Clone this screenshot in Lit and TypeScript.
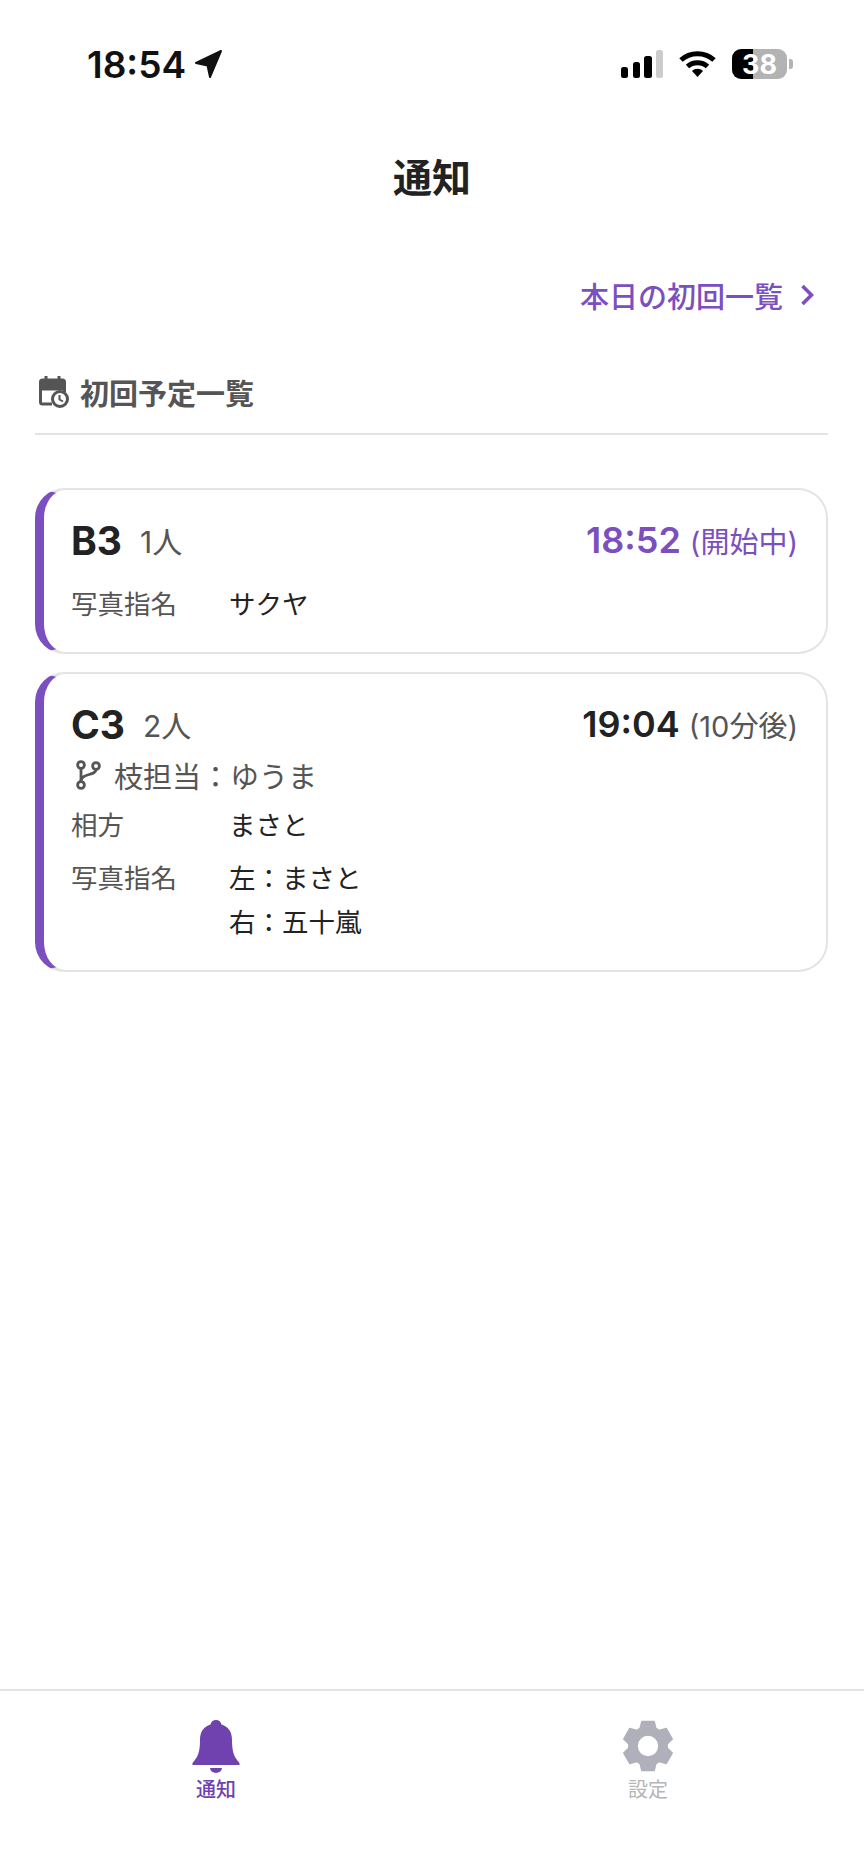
import { LitElement, html, css, unsafeCSS } from 'lit';
import { customElement } from 'lit/decorators.js';

const PURPLE = '#7b4fc0';
const purple = unsafeCSS(PURPLE);

interface Detail {
    label: string;
    values: string[];
}

interface Shift {
    seat: string;
    people: string;
    time: string;
    note: string;
    active?: boolean;
    branch?: string;
    details: Detail[];
}

const SHIFTS: Shift[] = [
    {
        seat: 'B3',
        people: '1人',
        time: '18:52',
        note: '(開始中)',
        active: true,
        details: [{ label: '写真指名', values: ['サクヤ'] }],
    },
    {
        seat: 'C3',
        people: '2人',
        time: '19:04',
        note: '(10分後)',
        branch: '枝担当：ゆうま',
        details: [
            { label: '相方', values: ['まさと'] },
            { label: '写真指名', values: ['左：まさと', '右：五十嵐'] },
        ],
    },
];

// six chunky teeth, flat on top, centred on (50,50)
function gearPath() {
    const pt = (r: number, deg: number) => {
        const a = (deg * Math.PI) / 180;
        return `${(50 + r * Math.cos(a)).toFixed(2)} ${(50 + r * Math.sin(a)).toFixed(2)}`;
    };
    let d = '';
    for (let i = 0; i < 6; i++) {
        const c = -90 + i * 60;
        d += `${i === 0 ? 'M' : 'L'}${pt(37, c - 24)} L${pt(48.5, c - 14)} L${pt(48.5, c + 14)} L${pt(37, c + 24)} `;
    }
    return `${d}Z M50 29 A21 21 0 1 0 50 71 A21 21 0 1 0 50 29 Z`;
}

@customElement('app-root')
export class AppRoot extends LitElement {
    static styles = css`
        :host {
            display: block;
            font-family: Inter, 'Noto Sans CJK JP', sans-serif;
            background: #fff;
            color: #222;
        }
        .page {
            display: flex;
            flex-direction: column;
            height: 1873px;
            background: #fff;
        }
        .status {
            display: flex;
            justify-content: space-between;
            align-items: center;
            height: 128px;
            padding: 0 71px 0 87px;
            box-sizing: border-box;
            flex: none;
        }
        .status-left {
            display: flex;
            align-items: center;
            gap: 8px;
            font-size: 37px;
            font-weight: 600;
            color: #111;
        }
        .status-right {
            display: flex;
            align-items: center;
            gap: 16px;
        }
        .battery {
            display: flex;
            align-items: center;
            gap: 2px;
        }
        .battery-body {
            width: 55px;
            height: 30px;
            border-radius: 9px;
            display: flex;
            align-items: center;
            justify-content: center;
            color: #fff;
            font-size: 27px;
            font-weight: 700;
            background: linear-gradient(90deg, #000 0 38%, #b3b3b3 38% 100%);
        }
        .battery-nub {
            width: 4px;
            height: 10px;
            background: #b3b3b3;
            border-radius: 0 3px 3px 0;
        }
        .title {
            height: 100px;
            line-height: 100px;
            text-align: center;
            font-size: 39px;
            font-weight: 700;
            flex: none;
        }
        .main {
            flex: 1;
            padding: 0 36px 0 35px;
        }
        .today {
            display: flex;
            justify-content: flex-end;
            align-items: center;
            gap: 17px;
            height: 40px;
            margin-top: 47px;
            padding-right: 14px;
            color: ${purple};
            font-size: 29px;
            font-weight: 500;
        }
        .section {
            display: flex;
            align-items: center;
            gap: 11px;
            height: 40px;
            margin-top: 57px;
            padding: 0 0 21px 4px;
            border-bottom: 2px solid #e4e4e4;
            color: #555;
            font-size: 29px;
            font-weight: 700;
        }
        .cards {
            display: flex;
            flex-direction: column;
            gap: 18px;
            margin-top: 53px;
        }
        .card {
            border: 2px solid #e4e4e4;
            border-left: 9px solid ${purple};
            border-radius: 30px;
            padding: 26px 28px 30px 27px;
        }
        .head {
            display: flex;
            justify-content: space-between;
            align-items: center;
            height: 48px;
        }
        .seat-group, .time-group {
            display: flex;
            align-items: center;
        }
        .seat {
            font-size: 39px;
            font-weight: 700;
            margin-right: 18px;
        }
        .people {
            font-size: 30px;
            color: #555;
        }
        .time {
            font-size: 36px;
            font-weight: 600;
            margin-right: 9px;
        }
        .note {
            font-size: 29px;
            color: #555;
        }
        .active .time, .active .note {
            color: ${purple};
        }
        .branch {
            display: flex;
            align-items: center;
            gap: 13px;
            height: 36px;
            margin-top: 9px;
            padding-left: 4px;
            font-size: 29px;
            color: #555;
        }
        .detail {
            display: grid;
            grid-template-columns: 158px 1fr;
            margin-top: 14px;
            font-size: 26.5px;
            line-height: 36px;
        }
        .detail.multi {
            margin-top: 17px;
        }
        .active .detail {
            margin-top: 22px;
        }
        .label {
            color: #555;
        }
        .values {
            display: flex;
            flex-direction: column;
            gap: 8px;
        }
        .nav {
            display: flex;
            flex: none;
            height: 184px;
            box-sizing: border-box;
            border-top: 2px solid #e4e4e4;
        }
        .tab {
            flex: 1;
            display: flex;
            flex-direction: column;
            align-items: center;
            padding-top: 29px;
            font-size: 20px;
            line-height: 24px;
            color: #b5b5b8;
        }
        .tab svg {
            display: block;
            margin-bottom: 4px;
        }
        .tab svg.gear {
            margin-bottom: 6px;
        }
        .tab.on {
            color: #6f42b0;
            font-weight: 500;
        }
    `;

    private renderStatus() {
        return html`
            <div class="status">
                <div class="status-left">
                    <span>18:54</span>
                    <svg width="29" height="30" viewBox="0 0 29 30" fill="#111" stroke="#111" stroke-width="2" stroke-linejoin="round">
                        <path d="M2 14 L27 2 L16 28 L13.5 16.5 Z" />
                    </svg>
                </div>
                <div class="status-right">
                    <svg width="42" height="28" viewBox="0 0 42 28">
                        <rect x="0" y="17" width="7" height="11" rx="2.5" fill="#000" />
                        <rect x="12" y="12" width="7" height="16" rx="2.5" fill="#000" />
                        <rect x="23" y="6" width="8" height="22" rx="2.5" fill="#000" />
                        <rect x="35" y="0" width="7" height="28" rx="2.5" fill="#ccc" />
                    </svg>
                    <svg width="37" height="28" viewBox="0 0 37 28" fill="none" stroke="#000" stroke-width="5">
                        <path d="M2 10 C 11 1.5 26 1.5 35 10" />
                        <path d="M8.5 16.5 C 14 11.5 23 11.5 28.5 16.5" />
                        <path d="M13 21 L18.5 27 L24 21 C 21 18 16 18 13 21 Z" fill="#000" stroke="none" />
                    </svg>
                    <div class="battery">
                        <div class="battery-body">38</div>
                        <div class="battery-nub"></div>
                    </div>
                </div>
            </div>
        `;
    }

    private renderCard(s: Shift) {
        return html`
            <div class="card ${s.active ? 'active' : ''}">
                <div class="head">
                    <div class="seat-group">
                        <span class="seat">${s.seat}</span>
                        <span class="people">${s.people}</span>
                    </div>
                    <div class="time-group">
                        <span class="time">${s.time}</span>
                        <span class="note">${s.note}</span>
                    </div>
                </div>
                ${s.branch
                    ? html`<div class="branch">
                          <svg width="26" height="30" viewBox="0 0 26 30" fill="none" stroke="#555" stroke-width="2.8">
                              <circle cx="6" cy="5" r="3.4" />
                              <circle cx="6" cy="25" r="3.4" />
                              <circle cx="21" cy="6" r="3.4" />
                              <path d="M6 8.5 V21.5" />
                              <path d="M21 9.5 C 21 16 6 13 6 21" />
                          </svg>
                          <span>${s.branch}</span>
                      </div>`
                    : ''}
                ${s.details.map(
                    (d) => html`<div class="detail ${d.values.length > 1 ? 'multi' : ''}">
                        <span class="label">${d.label}</span>
                        <div class="values">${d.values.map((v) => html`<span>${v}</span>`)}</div>
                    </div>`
                )}
            </div>
        `;
    }

    render() {
        return html`
            <div class="page">
                ${this.renderStatus()}
                <div class="title">通知</div>
                <div class="main">
                    <div class="today">
                        <span>本日の初回一覧</span>
                        <svg width="14" height="22" viewBox="0 0 14 22" fill="none" stroke="${PURPLE}" stroke-width="3.6">
                            <path d="M2.5 2 L11.5 11 L2.5 20" />
                        </svg>
                    </div>
                    <div class="section">
                        <svg width="30" height="32" viewBox="0 0 30 32" fill="none">
                            <path d="M7 0 V5 M20 0 V5" stroke="#555" stroke-width="3" />
                            <path d="M1.5 13 V6 Q1.5 4 3.5 4 H23.5 Q25.5 4 25.5 6 V13 H1.5 Z" fill="#555" stroke="#555" stroke-width="3" />
                            <path d="M1.5 13 V26 Q1.5 28 3.5 28 H13" stroke="#555" stroke-width="3" />
                            <path d="M25.5 13 V16" stroke="#555" stroke-width="3" />
                            <circle cx="21" cy="23" r="7.5" fill="#fff" stroke="#555" stroke-width="3" />
                            <path d="M20.5 19 V23.5 L24 25.5" stroke="#555" stroke-width="2" />
                        </svg>
                        <span>初回予定一覧</span>
                    </div>
                    <div class="cards">${SHIFTS.map((s) => this.renderCard(s))}</div>
                </div>
                <div class="nav">
                    <div class="tab on">
                        <svg width="48" height="54" viewBox="0 0 48 54" fill="#6f42b0">
                            <path d="M24 0 C 27 0 29 2 29.5 4.5 C 36.5 6.5 40 12 40 20 C 40 32 42 37 47.5 43 L 47.5 45 H 0.5 L 0.5 43 C 6 37 8 32 8 20 C 8 12 11.5 6.5 18.5 4.5 C 19 2 21 0 24 0 Z" />
                            <path d="M18 48 H30 C 29 54.5 19 54.5 18 48 Z" />
                        </svg>
                        <span>通知</span>
                    </div>
                    <div class="tab">
                        <svg class="gear" width="52" height="52" viewBox="0 0 100 100" fill="#b0b0ba" fill-rule="evenodd">
                            <path d="${gearPath()}" stroke="#b0b0ba" stroke-width="3" stroke-linejoin="round" />
                        </svg>
                        <span>設定</span>
                    </div>
                </div>
            </div>
        `;
    }
}
